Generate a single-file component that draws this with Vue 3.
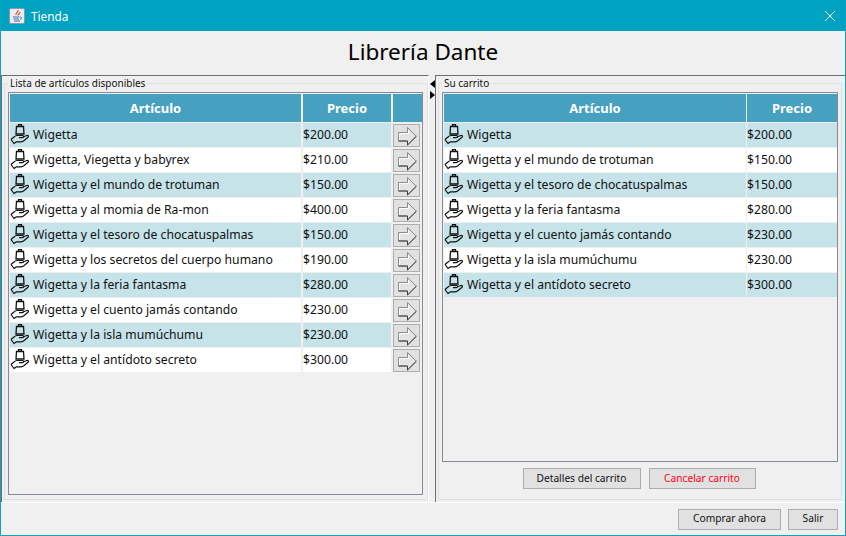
<template>
  <div class="window">
    <header class="titlebar">
      <svg class="java-icon" viewBox="0 0 16 16" width="16" height="16">
        <rect x="0.5" y="0.5" width="15" height="15" rx="1.5" fill="#e8edf4" stroke="#8d99ab" />
        <path d="M9 2c1 2-3 3-2 5M11 4c0 1.500-2 2-2 3.500" fill="none" stroke="#d8562a" stroke-width="1.200" />
        <path d="M4 9h6.500M4.500 11h5.500M5 13h6M11 9c2 0 2 2 0 2.500" fill="none" stroke="#3f6ea8" stroke-width="1" />
      </svg>
      <span class="window-title">Tienda</span>
      <svg class="close-icon" viewBox="0 0 12 12" width="12" height="12">
        <path d="M1 1l10 10M11 1L1 11" stroke="#fff" stroke-width="1" fill="none" />
      </svg>
    </header>

    <h1 class="store-title">Librería Dante</h1>

    <main class="split">
      <section class="pane pane-left">
        <fieldset class="group">
          <legend>Lista de artículos disponibles</legend>
          <div class="table table-left">
            <div class="row head">
              <div class="cell">Artículo</div>
              <div class="cell">Precio</div>
              <div class="cell"></div>
            </div>
            <div v-for="(item, i) in available" :key="item.name" class="row" :class="{ odd: i % 2 === 0 }">
              <div class="cell name">
                <svg class="bag" viewBox="0 -1 20 24" width="20" height="24">
                  <path d="M8.500 2.500V.7h3v1.800M6.500 2.500h7l.5 7.500H6z" fill="none" stroke="#111" stroke-width="1.300" />
                  <path d="M1 15.500l3-2.500c1-1 2-1.500 3-1.500h5.500c1.500 0 1.500 2.200-.5 2.200H9M13 13l3.800-1.500c1.500-.4 2.200.8 1.200 1.800l-4.500 3.700c-.8.5-1.800.8-2.800.8H6.500L4 19.500 1 15.500" fill="none" stroke="#111" stroke-width="1.200" stroke-linejoin="round" />
                </svg>
                <span>{{ item.name }}</span>
              </div>
              <div class="cell price">{{ item.price }}</div>
              <div class="cell action">
                <button class="add-btn" type="button">
                  <svg viewBox="0 0 24 20" width="24" height="20">
                    <path d="M3.500 6.500h9v-5l8.800 8.800-8.800 8.700V15h-9z" fill="#e4e4e4" stroke="#8c8c8c" stroke-width="1" />
                    <path d="M12.500 19l8.800-8.700M3.500 15h9v4" fill="none" stroke="#3c3c3c" stroke-width="1" />
                    <path d="M4.500 14V7.500h9V4" fill="none" stroke="#fff" stroke-width="1" />
                  </svg>
                </button>
              </div>
            </div>
          </div>
        </fieldset>
      </section>

      <div class="divider">
        <i class="arrow-left"></i>
        <i class="arrow-right"></i>
      </div>

      <section class="pane pane-right">
        <fieldset class="group">
          <legend>Su carrito</legend>
          <div class="table table-right">
            <div class="row head">
              <div class="cell">Artículo</div>
              <div class="cell">Precio</div>
            </div>
            <div v-for="(item, i) in cart" :key="item.name" class="row" :class="{ odd: i % 2 === 0 }">
              <div class="cell name">
                <svg class="bag" viewBox="0 -1 20 24" width="20" height="24">
                  <path d="M8.500 2.500V.7h3v1.800M6.500 2.500h7l.5 7.500H6z" fill="none" stroke="#111" stroke-width="1.300" />
                  <path d="M1 15.500l3-2.500c1-1 2-1.500 3-1.500h5.500c1.500 0 1.500 2.200-.5 2.200H9M13 13l3.800-1.500c1.500-.4 2.200.8 1.200 1.800l-4.500 3.700c-.8.5-1.800.8-2.800.8H6.500L4 19.500 1 15.500" fill="none" stroke="#111" stroke-width="1.200" stroke-linejoin="round" />
                </svg>
                <span>{{ item.name }}</span>
              </div>
              <div class="cell price">{{ item.price }}</div>
            </div>
          </div>
          <div class="cart-actions">
            <button class="btn details" type="button">Detalles del carrito</button>
            <button class="btn cancel" type="button">Cancelar carrito</button>
          </div>
        </fieldset>
      </section>
    </main>

    <footer class="footer">
      <button class="btn buy" type="button">Comprar ahora</button>
      <button class="btn quit" type="button">Salir</button>
    </footer>
  </div>
</template>

<script setup>
const available = [
  { name: 'Wigetta', price: '$200.00' },
  { name: 'Wigetta, Viegetta y babyrex', price: '$210.00' },
  { name: 'Wigetta y el mundo de trotuman', price: '$150.00' },
  { name: 'Wigetta y al momia de Ra-mon', price: '$400.00' },
  { name: 'Wigetta y el tesoro de chocatuspalmas', price: '$150.00' },
  { name: 'Wigetta y los secretos del cuerpo humano', price: '$190.00' },
  { name: 'Wigetta y la feria fantasma', price: '$280.00' },
  { name: 'Wigetta y el cuento jamás contando', price: '$230.00' },
  { name: 'Wigetta y la isla mumúchumu', price: '$230.00' },
  { name: 'Wigetta y el antídoto secreto', price: '$300.00' }
]

const cart = [
  { name: 'Wigetta', price: '$200.00' },
  { name: 'Wigetta y el mundo de trotuman', price: '$150.00' },
  { name: 'Wigetta y el tesoro de chocatuspalmas', price: '$150.00' },
  { name: 'Wigetta y la feria fantasma', price: '$280.00' },
  { name: 'Wigetta y el cuento jamás contando', price: '$230.00' },
  { name: 'Wigetta y la isla mumúchumu', price: '$230.00' },
  { name: 'Wigetta y el antídoto secreto', price: '$300.00' }
]
</script>

<style>
html,
body {
  margin: 0;
  background: #f0f0f0;
}
</style>

<style scoped>
.window {
  width: 846px;
  height: 536px;
  box-sizing: border-box;
  display: flex;
  flex-direction: column;
  background: #f0f0f0;
  border: 1px solid #0ba2c4;
  border-top: none;
  font-family: "Noto Sans", sans-serif;
  font-size: 12.200px;
  color: #111;
  overflow: hidden;
}

.titlebar {
  height: 31px;
  flex: none;
  display: flex;
  align-items: center;
  padding: 0 9px 0 8px;
  background: #00a2c2;
  color: #fff;
}

.window-title {
  margin-left: 6px;
  flex: 1;
  font-size: 11.800px;
}

.store-title {
  height: 44px;
  box-sizing: border-box;
  padding-bottom: 3px;
  margin: 0;
  flex: none;
  display: flex;
  align-items: center;
  justify-content: center;
  font-size: 22.500px;
  font-weight: 400;
  color: #000;
}

.split {
  height: 427px;
  flex: none;
  display: flex;
  border-bottom: 1px solid #fff;
}

.pane {
  box-sizing: border-box;
  border-top: 1px solid #6e6e6e;
  padding: 1px 3px 2px 2px;
}

.pane-left {
  width: 428px;
  padding-right: 0;
  border-left: 1px solid #6e6e6e;
  border-right: 1px solid #fff;
}

.pane-right {
  flex: 1;
  border-left: 1px solid #6e6e6e;
}

.divider {
  width: 6px;
  flex: none;
  box-sizing: border-box;
  display: flex;
  flex-direction: column;
  align-items: flex-start;
  gap: 3px;
  padding: 4px 0 0 1px;
  border-top: 1px solid #f0f0f0;
}

.arrow-left {
  width: 0;
  height: 0;
  border: 4px solid transparent;
  border-left: none;
  border-right: 5px solid #000;
}

.arrow-right {
  width: 0;
  height: 0;
  border: 4px solid transparent;
  border-right: none;
  border-left: 5px solid #000;
}

.group {
  height: 100%;
  box-sizing: border-box;
  margin: 0;
  padding: 3px 3px 4px 3px;
  display: flex;
  flex-direction: column;
  border: 1px solid #dfdfdf;
  min-width: 0;
}

.pane-left .group {
  padding-right: 4px;
}

.group legend {
  margin-left: 0;
  padding: 0 2px;
  font-size: 10px;
  line-height: 12px;
}

.table {
  flex: 1;
  min-height: 0;
  box-sizing: border-box;
  border: 1px solid #858b97;
  padding: 1px 0 0 1px;
}

.row {
  display: grid;
  height: 24px;
  margin-bottom: 1px;
  column-gap: 2px;
}

.table-left .row {
  grid-template-columns: 291px 88px 29px;
}

.table-right .row {
  grid-template-columns: 302px 90px;
  column-gap: 1px;
}

.row.head {
  height: 28px;
}

.cell {
  box-sizing: border-box;
  background: #fff;
  display: flex;
  align-items: center;
  white-space: nowrap;
}

.name span,
.price {
  padding-bottom: 2px;
}

.head .cell {
  justify-content: center;
  background: #46a0c0;
  color: #fff;
  font-weight: 700;
  font-size: 13px;
}

.odd .cell {
  background: #c5e3e9;
}

.odd .cell.action,
.cell.action {
  background: transparent;
  padding: 1px 0 0 0;
  align-items: flex-start;
}

.bag {
  margin-right: 3px;
  flex: none;
  align-self: flex-start;
}

.add-btn {
  width: 27px;
  height: 23px;
  padding: 0;
  display: flex;
  align-items: center;
  justify-content: center;
  background: #e1e1e1;
  border: 1px solid #adadad;
}

.cart-actions {
  height: 33px;
  flex: none;
  box-sizing: border-box;
  padding: 6px 2px 0 0;
  display: flex;
  justify-content: center;
  align-items: flex-start;
  gap: 8px;
}

.btn {
  height: 21px;
  box-sizing: border-box;
  padding: 0 0 2px;
  background: #e1e1e1;
  border: 1px solid #adadad;
  font-family: inherit;
  font-size: 10.200px;
  color: #111;
}

.details {
  width: 118px;
}

.cancel {
  width: 107px;
  color: #ff0020;
}

.footer {
  flex: 1;
  display: flex;
  justify-content: flex-end;
  align-items: center;
  gap: 7px;
  padding-right: 7px;
}

.buy {
  width: 103px;
}

.quit {
  width: 50px;
}
</style>
